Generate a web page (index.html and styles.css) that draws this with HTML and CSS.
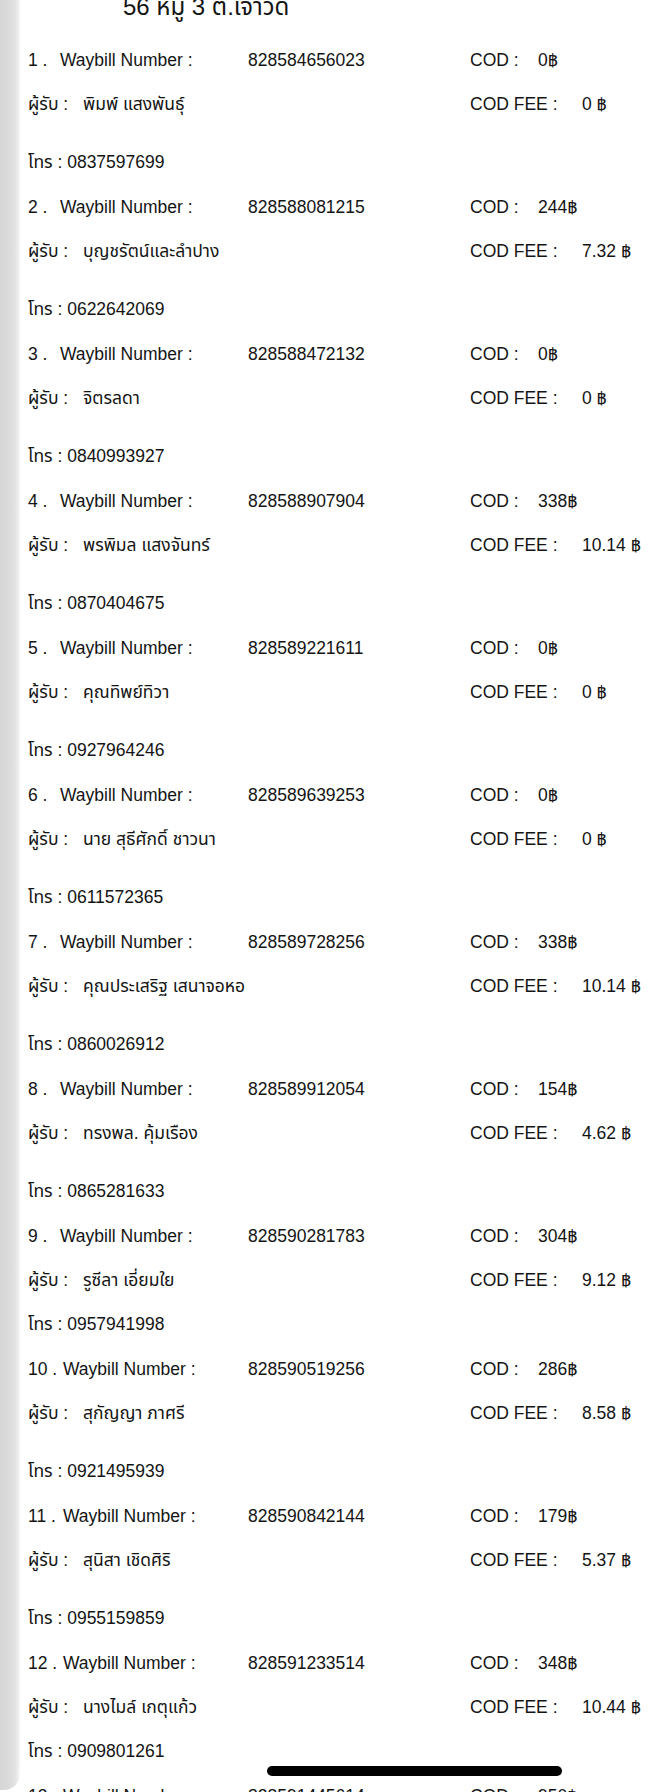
FILE: index.html
```html
<!DOCTYPE html>
<html lang="th">
<head>
<meta charset="utf-8">
<title>Waybill list</title>
<link rel="stylesheet" href="styles.css">
</head>
<body>
<div class="screen">
  <div class="side"></div>
  <main class="doc">
    <div class="head">56 หมู่ 3 ต.เจาวด</div>

    <section class="item">
      <div class="line"><span class="c1"><span class="no">1 .</span>Waybill Number :</span><span class="c2">828584656023</span><span class="c3">COD :</span><span>0฿</span></div>
      <div class="line recv"><span class="c12"><span class="rl">ผู้รับ :</span>พิมพ์ แสงพันธุ์</span><span class="c4">COD FEE :</span><span>0 ฿</span></div>
      <div class="line phone">โทร : 0837597699</div>
    </section>

    <section class="item">
      <div class="line"><span class="c1"><span class="no">2 .</span>Waybill Number :</span><span class="c2">828588081215</span><span class="c3">COD :</span><span>244฿</span></div>
      <div class="line recv"><span class="c12"><span class="rl">ผู้รับ :</span>บุญชรัตน์และลำปาง</span><span class="c4">COD FEE :</span><span>7.32 ฿</span></div>
      <div class="line phone">โทร : 0622642069</div>
    </section>

    <section class="item">
      <div class="line"><span class="c1"><span class="no">3 .</span>Waybill Number :</span><span class="c2">828588472132</span><span class="c3">COD :</span><span>0฿</span></div>
      <div class="line recv"><span class="c12"><span class="rl">ผู้รับ :</span>จิตรลดา</span><span class="c4">COD FEE :</span><span>0 ฿</span></div>
      <div class="line phone">โทร : 0840993927</div>
    </section>

    <section class="item">
      <div class="line"><span class="c1"><span class="no">4 .</span>Waybill Number :</span><span class="c2">828588907904</span><span class="c3">COD :</span><span>338฿</span></div>
      <div class="line recv"><span class="c12"><span class="rl">ผู้รับ :</span>พรพิมล แสงจันทร์</span><span class="c4">COD FEE :</span><span>10.14 ฿</span></div>
      <div class="line phone">โทร : 0870404675</div>
    </section>

    <section class="item">
      <div class="line"><span class="c1"><span class="no">5 .</span>Waybill Number :</span><span class="c2">828589221611</span><span class="c3">COD :</span><span>0฿</span></div>
      <div class="line recv"><span class="c12"><span class="rl">ผู้รับ :</span>คุณทิพย์ทิวา</span><span class="c4">COD FEE :</span><span>0 ฿</span></div>
      <div class="line phone">โทร : 0927964246</div>
    </section>

    <section class="item">
      <div class="line"><span class="c1"><span class="no">6 .</span>Waybill Number :</span><span class="c2">828589639253</span><span class="c3">COD :</span><span>0฿</span></div>
      <div class="line recv"><span class="c12"><span class="rl">ผู้รับ :</span>นาย สุธีศักดิ์ ชาวนา</span><span class="c4">COD FEE :</span><span>0 ฿</span></div>
      <div class="line phone">โทร : 0611572365</div>
    </section>

    <section class="item">
      <div class="line"><span class="c1"><span class="no">7 .</span>Waybill Number :</span><span class="c2">828589728256</span><span class="c3">COD :</span><span>338฿</span></div>
      <div class="line recv"><span class="c12"><span class="rl">ผู้รับ :</span>คุณประเสริฐ เสนาจอหอ</span><span class="c4">COD FEE :</span><span>10.14 ฿</span></div>
      <div class="line phone">โทร : 0860026912</div>
    </section>

    <section class="item">
      <div class="line"><span class="c1"><span class="no">8 .</span>Waybill Number :</span><span class="c2">828589912054</span><span class="c3">COD :</span><span>154฿</span></div>
      <div class="line recv"><span class="c12"><span class="rl">ผู้รับ :</span>ทรงพล. คุ้มเรือง</span><span class="c4">COD FEE :</span><span>4.62 ฿</span></div>
      <div class="line phone">โทร : 0865281633</div>
    </section>

    <section class="item">
      <div class="line"><span class="c1"><span class="no">9 .</span>Waybill Number :</span><span class="c2">828590281783</span><span class="c3">COD :</span><span>304฿</span></div>
      <div class="line recv short"><span class="c12"><span class="rl">ผู้รับ :</span>รูซีลา เอี่ยมใย</span><span class="c4">COD FEE :</span><span>9.12 ฿</span></div>
      <div class="line phone">โทร : 0957941998</div>
    </section>

    <section class="item">
      <div class="line"><span class="c1"><span class="no wide">10 .</span>Waybill Number :</span><span class="c2">828590519256</span><span class="c3">COD :</span><span>286฿</span></div>
      <div class="line recv"><span class="c12"><span class="rl">ผู้รับ :</span>สุกัญญา ภาศรี</span><span class="c4">COD FEE :</span><span>8.58 ฿</span></div>
      <div class="line phone">โทร : 0921495939</div>
    </section>

    <section class="item">
      <div class="line"><span class="c1"><span class="no wide">11 .</span>Waybill Number :</span><span class="c2">828590842144</span><span class="c3">COD :</span><span>179฿</span></div>
      <div class="line recv"><span class="c12"><span class="rl">ผู้รับ :</span>สุนิสา เชิดศิริ</span><span class="c4">COD FEE :</span><span>5.37 ฿</span></div>
      <div class="line phone">โทร : 0955159859</div>
    </section>

    <section class="item">
      <div class="line"><span class="c1"><span class="no wide">12 .</span>Waybill Number :</span><span class="c2">828591233514</span><span class="c3">COD :</span><span>348฿</span></div>
      <div class="line recv short"><span class="c12"><span class="rl">ผู้รับ :</span>นางไมล์ เกตุแก้ว</span><span class="c4">COD FEE :</span><span>10.44 ฿</span></div>
      <div class="line phone">โทร : 0909801261</div>
    </section>

    <section class="item">
      <div class="line"><span class="c1"><span class="no wide">13 .</span>Waybill Number :</span><span class="c2">828591445614</span><span class="c3">COD :</span><span>950฿</span></div>
    </section>
  </main>
  <div class="home-bar"></div>
</div>
</body>
</html>
```

FILE: styles.css
```css
* { box-sizing: border-box; }

html, body {
  margin: 0;
  padding: 0;
  background: #ffffff;
}

body {
  width: 656px;
  height: 1792px;
  overflow: hidden;
  font-family: "Liberation Sans", "Noto Sans Thai", "Noto Sans", "DejaVu Sans", sans-serif;
  color: #141414;
}

.screen {
  position: relative;
  display: flex;
  width: 656px;
  height: 1792px;
  overflow: hidden;
}

.side {
  flex: 0 0 20px;
  height: 1790px;
  background: linear-gradient(to right, #d6d6d6 0, #dcdcdc 10px, #e2e2e2 15px, #eeeeee 18px, #fafafa 20px);
  border-bottom-right-radius: 16px;
}

.doc {
  flex: 1 1 auto;
  padding-left: 8px;
  font-size: 17.5px;
}

.head {
  font-size: 24px;
  line-height: 30px;
  margin-top: -8px;
  margin-bottom: 16px;
  padding-left: 95px;
}

.line {
  display: flex;
  height: 44px;
  line-height: 44px;
  white-space: pre;
}

.recv {
  height: 58px;
  padding-bottom: 14px;
}

.recv.short {
  height: 44px;
  padding-bottom: 0;
}

.phone {
  height: 45px;
  line-height: 45px;
}

.c1 { flex: 0 0 220px; }
.c2 { flex: 0 0 222px; }
.c3 { flex: 0 0 68px; }
.c12 { flex: 0 0 442px; }
.c4 { flex: 0 0 112px; }

.no {
  display: inline-block;
  width: 32px;
}

.no.wide {
  width: 35px;
}

.rl {
  display: inline-block;
  width: 55px;
}

.home-bar {
  position: absolute;
  left: 267px;
  top: 1766px;
  width: 295px;
  height: 10px;
  border-radius: 5px;
  background: #000;
}
```
